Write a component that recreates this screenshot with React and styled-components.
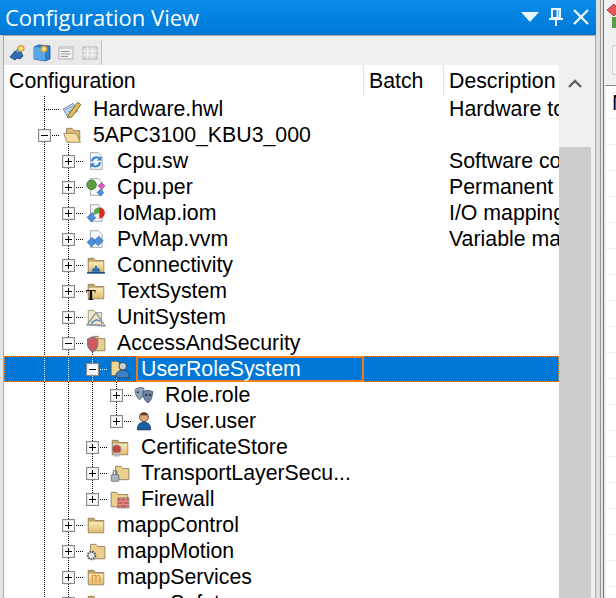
import React from "react";
import styled, { createGlobalStyle } from "styled-components";

const GlobalStyle = createGlobalStyle`
  html, body {
    margin: 0;
    padding: 0;
    background: #f0f0f0;
  }
  * {
    box-sizing: border-box;
  }
`;

// *** Layout ***

const Page = styled.div`
  display: flex;
  width: 616px;
  height: 598px;
  overflow: hidden;
  font-family: "Liberation Sans", Arial, sans-serif;
  color: #000;
`;
const Panel = styled.section`
  display: flex;
  flex-direction: column;
  flex: 0 0 596px;
`;
const TitleBar = styled.header`
  display: flex;
  align-items: center;
  flex: 0 0 35px;
  padding-left: 5px;
  background: linear-gradient(#0a8de9, #0078d7);
  border-bottom: 1px solid #0a6fc0;
`;
const Title = styled.h1`
  flex: 1;
  margin: 0;
  font-family: "Open Sans", sans-serif;
  font-size: 22px;
  font-weight: 400;
  color: #fff;
`;
const TitleButtons = styled.div`
  display: flex;
  align-items: center;
  gap: 10px;
  padding-right: 7px;
`;
const Body = styled.div`
  display: flex;
  flex: 1;
  min-height: 0;
  border-top: 1px solid #ababab;
  border-left: 3px solid #e4e4e4;
  border-right: 1px solid #ababab;
`;
const Content = styled.div`
  display: flex;
  flex-direction: column;
  width: 556px;
  border-left: 1px solid #ababab;
  padding-top: 4px;
`;
const Toolbar = styled.div`
  display: flex;
  align-items: center;
  gap: 6px;
  flex: 0 0 25px;
  width: 98px;
  padding-left: 5px;
  background: #e9e9e9;
  border-right: 1px solid #c4c4c4;
`;
const Table = styled.div`
  flex: 1;
  min-height: 0;
  background: #fff;
  overflow: hidden;
`;
const Columns = styled.div`
  display: grid;
  grid-template-columns: 360px 80px 115px;
  height: ${(p) => (p.$head ? "31px" : "26px")};
  font-size: 21.3px;
  line-height: 26px;
`;
const HeadCell = styled.div`
  padding-left: 5px;
  white-space: nowrap;
  overflow: hidden;
  border-right: ${(p) => (p.$last ? "none" : "1px solid #e5e5e5")};
  line-height: 32px;
`;
const Row = styled(Columns)`
  background: ${(p) => (p.$selected ? "#0078d7" : "transparent")};
  outline: ${(p) => (p.$selected ? "1px dotted #ff8a1e" : "none")};
  outline-offset: -1px;
  color: ${(p) => (p.$selected ? "#fff" : "#000")};
`;
const TreeCell = styled.div`
  display: flex;
  padding-left: 28px;
  height: 26px;
  white-space: nowrap;
  overflow: hidden;
`;
const DescCell = styled.div`
  grid-column: 3;
  padding-left: 5px;
  white-space: nowrap;
  overflow: hidden;
`;

// *** Tree parts ***

const dots = (color) =>
  `repeating-linear-gradient(to bottom, ${color} 0 1px, transparent 1px 2px)`;
const dotsAcross = (color) =>
  `repeating-linear-gradient(to right, ${color} 0 1px, transparent 1px 2px)`;

const Guide = styled.span`
  flex: 0 0 24px;
  height: 26px;
  background-image: ${(p) => dots(p.$color)};
  background-repeat: no-repeat;
  background-size: 1px 26px;
  background-position: 12px 0;
`;
const ToggleCell = styled.span`
  display: flex;
  align-items: center;
  justify-content: center;
  flex: 0 0 24px;
  height: 26px;
  background-image: ${(p) => `${dots(p.$color)}, ${dotsAcross(p.$color)}`};
  background-repeat: no-repeat;
  background-size: 1px ${(p) => (p.$short ? "13px" : "26px")}, 12px 1px;
  background-position: 12px 0, 12px 13px;
`;
const Expander = styled.span`
  display: flex;
  align-items: center;
  justify-content: center;
  width: 13px;
  height: 13px;
  background: #fff;
  border: 1px solid #8a8a8a;
  box-shadow: inset 0 0 0 1px #e8e8e8;
  svg {
    display: block;
  }
`;
const IconCell = styled.span`
  display: flex;
  align-items: center;
  flex: 0 0 37px;
  height: 26px;
  padding-left: 6px;
  background-image: ${(p) =>
    p.$open
      ? `${dotsAcross(p.$color)}, ${dots(p.$color)}`
      : dotsAcross(p.$color)};
  background-repeat: no-repeat;
  background-size: 3px 1px, 1px 6px;
  background-position: 0 13px, 12px 100%;
  svg {
    display: block;
  }
`;
const Label = styled.span`
  flex: 1;
  padding-left: ${(p) => (p.$editing ? "3px" : "0")};
  margin-left: ${(p) => (p.$editing ? "-5px" : "0")};
  border: ${(p) => (p.$editing ? "2px solid #f07a1c" : "none")};
  line-height: ${(p) => (p.$editing ? "22px" : "26px")};
`;

// *** Scrollbar and right side ***

const ScrollBar = styled.div`
  display: flex;
  flex-direction: column;
  width: 32px;
`;
const ScrollButton = styled.div`
  display: flex;
  align-items: flex-end;
  justify-content: center;
  flex: 0 0 111px;
  padding-bottom: 59px;
`;
const ScrollThumb = styled.div`
  flex: 1;
  background: #cdcdcd;
`;
const Rail = styled.div`
  flex: 0 0 8px;
  background: linear-gradient(
    to right,
    #dedede 0 4px,
    #9a9a9a 4px 5px,
    #e4e4e4 5px 7px,
    #6f6f6f 7px 8px
  );
`;
const RightPane = styled.aside`
  display: flex;
  flex-direction: column;
  flex: 1;
  overflow: hidden;
`;
const RightTools = styled.div`
  flex: 0 0 85px;
  padding: 2px 0 0 3px;
  background: #f0f0f0;
`;
const ToolTile = styled.div`
  width: 9px;
  height: 30px;
  svg {
    display: block;
  }
`;
const GhostButton = styled.div`
  width: 12px;
  height: 30px;
  margin: 13px 0 0 5px;
  background: #f6f6f6;
  border: 1px solid #d2d2d2;
  border-right: none;
`;
const Notes = styled.div`
  flex: 1;
  padding-left: 6px;
  font-size: 21.3px;
  line-height: 34px;
  background-color: #fff;
  border-top: 1px solid #8a8a8a;
  border-left: 2px solid #f0f0f0;
  background-image: repeating-linear-gradient(
    to bottom,
    transparent 0 25px,
    #eeeef6 25px 26px
  );
  background-position: 0 7px;
  background-size: 100% 26px;
`;

// *** Icons ***

const Svg = ({ children, size = 20 }) => (
  <svg width={size} height={size} viewBox="0 0 18 18">
    {children}
  </svg>
);

const FolderShape = () => (
  <>
    <defs>
      <linearGradient id="folderFill" x1="0" y1="0" x2="0" y2="1">
        <stop offset="0" stopColor="#fbeab8" />
        <stop offset="1" stopColor="#e0bd70" />
      </linearGradient>
    </defs>
    <path d="M2 3h5l1.500 2H16v11H2z" fill="#c4a868" stroke="#8f7c58" strokeWidth=".8" />
    <path d="M2.600 6h13v9.600h-13z" fill="url(#folderFill)" />
  </>
);

const DocPage = () => (
  <path d="M4 1.500h7l3.500 3.500v11.500H4z" fill="#f6f8fb" stroke="#a4abb5" strokeWidth=".9" />
);

const Diamond = ({ x, y, fill = "#4a90dd" }) => (
  <path
    d={`M${x} ${y}l4.500-4.500 4 4-4.500 4.500z`}
    fill={fill}
    stroke="#26609f"
    strokeWidth=".6"
  />
);

const icons = {
  hwl: (
    <Svg>
      <path d="M1 9l9-5 4 7-9 5z" fill="#c4d6ea" stroke="#6b7f98" strokeWidth=".8" />
      <path d="M3 9.500l7-3M5 12l6-3" stroke="#7b8ea6" strokeWidth=".7" />
      <path d="M6 14L14 3l3 2-8 11-4 1z" fill="#e9c04f" stroke="#5e5a45" strokeWidth=".8" />
    </Svg>
  ),
  folder: (
    <Svg>
      <FolderShape />
    </Svg>
  ),
  folderOpen: (
    <Svg>
      <path d="M4 3h5l1.500 2H16v9H4z" fill="#d9bd7c" stroke="#8f7c58" strokeWidth=".8" />
      <path d="M1.500 7.500H13l3.500 8H4.500z" fill="#f5dd9f" stroke="#9a8454" strokeWidth=".8" />
    </Svg>
  ),
  sw: (
    <Svg>
      <DocPage />
      <path d="M5.500 9.500a4 4 0 0 1 7-2.500" fill="none" stroke="#2f80d6" strokeWidth="1.800" />
      <path d="M12.500 10a4 4 0 0 1-7 2.500" fill="none" stroke="#2f80d6" strokeWidth="1.800" />
      <path d="M13.800 4.500v4h-4zM4.200 15v-4h4z" fill="#2f80d6" />
    </Svg>
  ),
  per: (
    <Svg>
      <DocPage />
      <circle cx="5" cy="7" r="4.300" fill="#5c9e3c" stroke="#2f6622" strokeWidth=".7" />
      <path d="M11 8l3-3 3 3-3 3z" fill="#e05ad0" stroke="#93308a" strokeWidth=".6" />
      <path d="M10 14l3-3 3 3-3 3z" fill="#4a90dd" stroke="#26609f" strokeWidth=".6" />
    </Svg>
  ),
  iomap: (
    <Svg>
      <DocPage />
      <Diamond x={1} y={13} />
      <circle cx="12" cy="9" r="5" fill="#d92a24" />
      <path d="M12 4a5 5 0 0 0-4.800 6.500L12 9z" fill="#4fae48" />
      <path d="M12 9l-4.800 1.500A5 5 0 0 0 12 14z" fill="#f2f2f2" />
    </Svg>
  ),
  pvmap: (
    <Svg>
      <DocPage />
      <Diamond x={1} y={12} />
      <Diamond x={7} y={11} />
    </Svg>
  ),
  connectivity: (
    <Svg>
      <FolderShape />
      <path d="M1 16h16" stroke="#1c4f8c" strokeWidth="1.600" />
      <path d="M6 12h6l1 3H5zM8 10h2v3H8z" fill="#2a6cb0" />
    </Svg>
  ),
  textsys: (
    <Svg>
      <FolderShape />
      <text x="0" y="17" fontFamily="Liberation Serif" fontWeight="700" fontSize="13" fill="#000">
        T
      </text>
    </Svg>
  ),
  unit: (
    <Svg>
      <path d="M2 3h5l1.500 2H14v11H2z" fill="#f1e4c0" stroke="#9a9078" strokeWidth=".8" />
      <path d="M1 16L9 5l8 12z" fill="none" stroke="#8d98a6" strokeWidth="1.200" />
      <path d="M5 15a5 5 0 0 1 8-2" fill="none" stroke="#4f86c4" strokeWidth="1.300" />
    </Svg>
  ),
  access: (
    <Svg>
      <path d="M7 3h4l1 2h5v11H7z" fill="#e6cd90" stroke="#8f7c58" strokeWidth=".8" />
      <path d="M1.500 5.500L6 3.500l4.500 2v5c0 3-2.500 5-4.500 6.500-2-1.500-4.500-3.500-4.500-6.500z" fill="#cf5a5f" stroke="#77777d" strokeWidth="1" />
    </Svg>
  ),
  urs: (
    <Svg>
      <path d="M1 2h6l1.500 2H14v11H1z" fill="#f0d58f" stroke="#6f6040" strokeWidth=".8" />
      <circle cx="11.500" cy="6.500" r="3.400" fill="#c9ccd2" stroke="#2c3e55" strokeWidth=".8" />
      <path d="M5 17c0-4.500 2.500-7 6.500-7s6 2.500 6 7z" fill="#3c7fc4" stroke="#173f6e" strokeWidth=".8" />
    </Svg>
  ),
  role: (
    <Svg>
      <path d="M1 4c3-2 6-2 8-1 0 5-1 9-4 10C3 12 1 9 1 4z" fill="#8fa3bd" stroke="#4d5c72" strokeWidth=".7" />
      <path d="M8 6c3-1.500 6-1.500 9 0-.5 5-2 9-4.500 10C10 15 8 11 8 6z" fill="#6d84a4" stroke="#3e4c62" strokeWidth=".7" />
      <circle cx="11" cy="9" r="1" fill="#1f2733" />
      <circle cx="14.500" cy="9" r="1" fill="#1f2733" />
      <circle cx="3.500" cy="6.500" r=".9" fill="#1f2733" />
    </Svg>
  ),
  user: (
    <Svg>
      <circle cx="9" cy="5.500" r="4" fill="#e0a878" stroke="#5d3b20" strokeWidth=".8" />
      <path d="M5 3.500c1-2.500 7-2.500 8 0-2 .5-6 .5-8 0z" fill="#5d3b20" />
      <path d="M3 17c0-4.500 2-7 6-7s6 2.500 6 7z" fill="#1e5f9e" stroke="#123c68" strokeWidth=".7" />
    </Svg>
  ),
  cert: (
    <Svg>
      <FolderShape />
      <circle cx="6" cy="11" r="3.800" fill="#c8433b" stroke="#8b8b8b" strokeWidth="1" />
      <path d="M4 14l-1 3.500h6L8 14z" fill="#b9b9b9" />
    </Svg>
  ),
  tls: (
    <Svg>
      <path d="M5 3h5l1.500 2H17v10H5z" fill="#ebcf8c" stroke="#8f7c58" strokeWidth=".8" />
      <rect x="1" y="10.500" width="7" height="6" rx="1" fill="#aab4c0" stroke="#636b78" strokeWidth=".7" />
      <path d="M2.800 10.500V8.500a1.700 1.700 0 0 1 3.400 0v2" fill="none" stroke="#636b78" strokeWidth="1" />
    </Svg>
  ),
  firewall: (
    <Svg>
      <path d="M1 3h5l1.500 2H16v11H1z" fill="#ebcf8c" stroke="#8f7c58" strokeWidth=".8" />
      <rect x="7" y="8" width="10" height="9" fill="#c9605c" stroke="#8a8a8a" strokeWidth=".8" />
      <path d="M7 11h10M7 14h10M10 8v3M14 8v3M12 11v3M9 14v3M15 14v3" stroke="#e8b0a8" strokeWidth=".6" />
    </Svg>
  ),
  motion: (
    <Svg>
      <path d="M4 3h5l1.500 2H17v11H4z" fill="#ebcf8c" stroke="#8f7c58" strokeWidth=".8" />
      <circle cx="5" cy="13" r="3.400" fill="#e4e4e4" stroke="#55585e" strokeWidth="1.800" strokeDasharray="1.500 .8" />
    </Svg>
  ),
  services: (
    <Svg>
      <FolderShape />
      <text x="4.500" y="13.500" fontFamily="Liberation Sans" fontSize="11" fill="#f08a12">
        m
      </text>
    </Svg>
  ),
};

const ToolbarIcon = ({ kind }) => {
  if (kind === "puzzle")
    return (
      <Svg size={18}>
        <path d="M1 13l5-6 3 2 3-1 2 4-3 3-3-1-2 2z" fill="#2f6bb0" stroke="#173f70" strokeWidth=".8" />
        <path d="M6 7l3-3 3 3-3 2z" fill="#5b93cf" />
        <circle cx="12" cy="4.500" r="3.300" fill="#f0c050" stroke="#a88a3a" strokeWidth=".6" />
        <circle cx="12" cy="4.500" r="1.200" fill="#fff3c8" />
      </Svg>
    );
  if (kind === "cube")
    return (
      <Svg size={18}>
        <path d="M1 3l5-2 11 1v13l-5 2-11-2z" fill="#2b7fd4" stroke="#1c4f8c" strokeWidth=".8" />
        <path d="M1 3l11 1v13l-11-2z" fill="#5aa6e8" />
        <circle cx="11" cy="5" r="3.300" fill="#f0c050" stroke="#a88a3a" strokeWidth=".6" />
        <circle cx="11" cy="5" r="1.200" fill="#fff3c8" />
      </Svg>
    );
  if (kind === "list")
    return (
      <Svg size={18}>
        <rect x="2" y="3" width="14" height="12" fill="#f2f2f2" stroke="#b2b2b2" />
        <path d="M2 4h14" stroke="#cfcfcf" strokeWidth="2" />
        <path d="M4 7.500h9M4 10h6M10 10h4M4 12.500h7" stroke="#9a9a9a" />
      </Svg>
    );
  return (
    <Svg size={18}>
      <rect x="2" y="3" width="14" height="12" fill="#dcdcdc" stroke="#b8b8b8" />
      <path d="M2 7h14M2 11h14M6.700 3v12M11.300 3v12" stroke="#f4f4f4" />
    </Svg>
  );
};

const Sign = ({ open, color = "#000" }) => (
  <svg width="9" height="9" viewBox="0 0 9 9">
    <path d="M1 4.500h7" stroke={color} />
    {!open && <path d="M4.500 1v7" stroke={color} />}
  </svg>
);

// *** Data ***

const rows = [
  { level: 0, icon: "hwl", label: "Hardware.hwl", desc: "Hardware tools" },
  { level: 0, icon: "folderOpen", label: "5APC3100_KBU3_000", toggle: "open", children: true },
  { level: 1, icon: "sw", label: "Cpu.sw", toggle: "closed", desc: "Software configuration" },
  { level: 1, icon: "per", label: "Cpu.per", toggle: "closed", desc: "Permanent" },
  { level: 1, icon: "iomap", label: "IoMap.iom", toggle: "closed", desc: "I/O mapping" },
  { level: 1, icon: "pvmap", label: "PvMap.vvm", toggle: "closed", desc: "Variable mapping" },
  { level: 1, icon: "connectivity", label: "Connectivity", toggle: "closed" },
  { level: 1, icon: "textsys", label: "TextSystem", toggle: "closed" },
  { level: 1, icon: "unit", label: "UnitSystem", toggle: "closed" },
  { level: 1, icon: "access", label: "AccessAndSecurity", toggle: "open", children: true },
  { level: 2, icon: "urs", label: "UserRoleSystem", toggle: "open", children: true, selected: true },
  { level: 3, icon: "role", label: "Role.role", toggle: "closed" },
  { level: 3, icon: "user", label: "User.user", toggle: "closed", last: true },
  { level: 2, icon: "cert", label: "CertificateStore", toggle: "closed" },
  { level: 2, icon: "tls", label: "TransportLayerSecu...", toggle: "closed" },
  { level: 2, icon: "firewall", label: "Firewall", toggle: "closed", last: true },
  { level: 1, icon: "folder", label: "mappControl", toggle: "closed" },
  { level: 1, icon: "motion", label: "mappMotion", toggle: "closed" },
  { level: 1, icon: "services", label: "mappServices", toggle: "closed" },
  { level: 1, icon: "folder", label: "mappSafety", toggle: "closed" },
];

const TreeRow = ({ row }) => {
  const color = row.selected ? "#fff" : "#000";
  return (
    <Row $selected={row.selected}>
      <TreeCell>
        {Array.from({ length: row.level }).map((_, i) => (
          <Guide key={i} $color={color} />
        ))}
        <ToggleCell $color={color} $short={row.last}>
          {row.toggle ? (
            <Expander>
              <Sign open={row.toggle === "open"} />
            </Expander>
          ) : null}
        </ToggleCell>
        <IconCell $color={color} $open={row.children}>
          {icons[row.icon]}
        </IconCell>
        <Label $editing={row.selected}>{row.label}</Label>
      </TreeCell>
      {row.desc ? <DescCell>{row.desc}</DescCell> : null}
    </Row>
  );
};

const App = () => (
  <>
    <GlobalStyle />
    <Page>
      <Panel>
        <TitleBar>
          <Title>Configuration View</Title>
          <TitleButtons>
            <svg width="18" height="10" viewBox="0 0 18 10">
              <path d="M0 0h18L9 10z" fill="#eaf5ff" />
            </svg>
            <svg width="14" height="18" viewBox="0 0 14 18">
              <path d="M3 1h8v9H3zM0 11h14M7 11v7M8.500 2v8" stroke="#eaf5ff" strokeWidth="2" fill="none" />
            </svg>
            <svg width="16" height="16" viewBox="0 0 16 16">
              <path d="M1 1l14 14M15 1L1 15" stroke="#eaf5ff" strokeWidth="2.400" />
            </svg>
          </TitleButtons>
        </TitleBar>
        <Body>
          <Content>
            <Toolbar>
              <ToolbarIcon kind="puzzle" />
              <ToolbarIcon kind="cube" />
              <ToolbarIcon kind="list" />
              <ToolbarIcon kind="grid" />
            </Toolbar>
            <Table>
              <Columns $head>
                <HeadCell>Configuration</HeadCell>
                <HeadCell>Batch</HeadCell>
                <HeadCell $last>Description</HeadCell>
              </Columns>
              {rows.map((row) => (
                <TreeRow key={row.label} row={row} />
              ))}
            </Table>
          </Content>
          <ScrollBar>
            <ScrollButton>
              <svg width="14" height="9" viewBox="0 0 14 9">
                <path d="M1 8l6-6 6 6" fill="none" stroke="#606060" strokeWidth="2.400" />
              </svg>
            </ScrollButton>
            <ScrollThumb />
          </ScrollBar>
        </Body>
      </Panel>
      <Rail />
      <RightPane>
        <RightTools>
          <ToolTile>
            <svg width="9" height="30" viewBox="0 0 9 30">
              <path d="M0 8l7-6 5 6-5 6z" fill="#e4595a" stroke="#a83536" />
              <rect x="5" y="15" width="4" height="11" fill="#55a045" />
            </svg>
          </ToolTile>
          <GhostButton />
        </RightTools>
        <Notes>N</Notes>
      </RightPane>
    </Page>
  </>
);

export default App;
